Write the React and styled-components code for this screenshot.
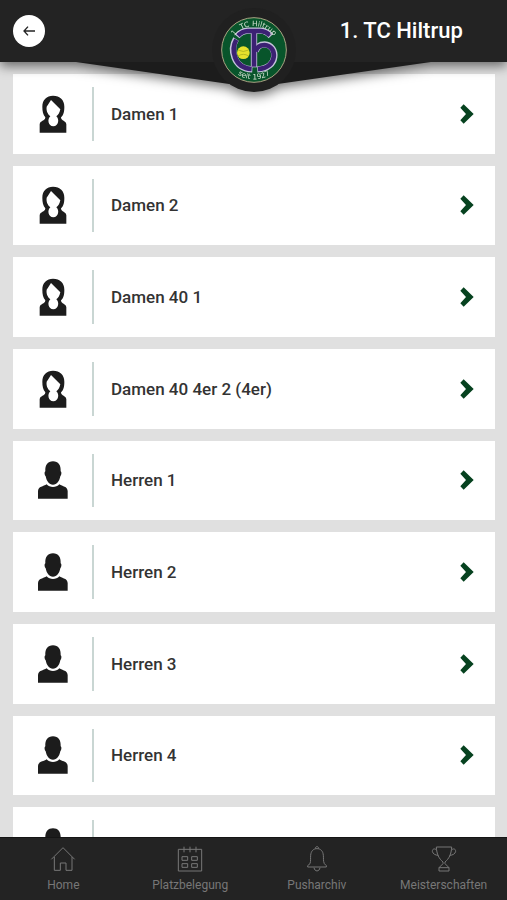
import React from 'react'
import styled, { createGlobalStyle } from 'styled-components'

const teams = [
  { id: 1, name: 'Damen 1', female: true },
  { id: 2, name: 'Damen 2', female: true },
  { id: 3, name: 'Damen 40 1', female: true },
  { id: 4, name: 'Damen 40 4er 2 (4er)', female: true },
  { id: 5, name: 'Herren 1' },
  { id: 6, name: 'Herren 2' },
  { id: 7, name: 'Herren 3' },
  { id: 8, name: 'Herren 4' },
  { id: 9, name: '' },
]

const tabs = [
  { label: 'Home', Icon: HomeIcon },
  { label: 'Platzbelegung', Icon: CalendarIcon },
  { label: 'Pusharchiv', Icon: BellIcon },
  { label: 'Meisterschaften', Icon: TrophyIcon },
]

export default function App() {
  return (
    <>
      <GlobalStyle />
      <Screen>
        <Header>
          <Notch viewBox="0 0 352 22" preserveAspectRatio="none" aria-hidden="true">
            <path d="M0 0H352L200 22H152Z" />
          </Notch>
          <BackButton type="button" aria-label="Zurück">
            <svg width="12" height="10" viewBox="0 0 36 30">
              <path d="M36 15H3M15 2L3 15L15 28" />
            </svg>
          </BackButton>
          <Badge>
            <ClubLogo />
          </Badge>
          <Title>1. TC Hiltrup</Title>
        </Header>
        <Main>
          <TeamList>
            {teams.map((team) => (
              <li key={team.id}>
                <TeamLink href="#">
                  <Avatar>{team.female ? <WomanIcon /> : <ManIcon />}</Avatar>
                  <TeamName>{team.name}</TeamName>
                  <Chevron viewBox="0 0 42 60" aria-hidden="true">
                    <path d="M11 1L41 30L11 59L1 49L18 30L1 11Z" />
                  </Chevron>
                </TeamLink>
              </li>
            ))}
          </TeamList>
        </Main>
        <TabBar>
          {tabs.map(({ label, Icon }) => (
            <Tab href="#" key={label}>
              <Icon />
              <span>{label}</span>
            </Tab>
          ))}
        </TabBar>
      </Screen>
    </>
  )
}

function ClubLogo() {
  return (
    <svg width="66" height="66" viewBox="154 50 198 198" role="img" aria-label="1. TC Hiltrup">
      <defs>
        <path id="logo-top" d="M181 149A72 72 0 0 1 325 149" />
        <path id="logo-bottom" d="M165 149A88 88 0 0 0 341 149" />
      </defs>
      <circle cx="253" cy="149" r="97" fill="#08552b" stroke="#a9a583" strokeWidth="3" />
      <g fill="none" stroke="#c5c3dc" strokeWidth="19">
        <path d="M199 116C181 146 189 204 248 207" />
        <path d="M263 207C328 206 326 134 285 132Q263 132 258 154" />
        <path d="M253 92V201" />
        <path d="M202 108Q215 92 235 91H273Q290 92 304 107" />
      </g>
      <g fill="none" stroke="#3b2173" strokeWidth="14">
        <path d="M200 118C184 146 191 202 246 206" />
        <path d="M265 206C325 204 324 136 285 134Q263 134 258 154" />
        <path d="M253 92V199" />
        <path d="M205 106Q217 93 235 92H273Q289 93 301 105" />
      </g>
      <circle cx="221" cy="157" r="19" fill="#e6e22c" />
      <path d="M205 149Q221 158 237 149M205 167Q221 157 237 167" fill="none" stroke="#9ea51b" strokeWidth="2" />
      <LogoText>
        <textPath href="#logo-top" startOffset="50%">
          1. TC Hiltrup
        </textPath>
      </LogoText>
      <LogoText>
        <textPath href="#logo-bottom" startOffset="50%">
          seit 1927
        </textPath>
      </LogoText>
    </svg>
  )
}

function WomanIcon() {
  return (
    <svg width="30" height="38" viewBox="112 283 90 114">
      <path
        fillRule="evenodd"
        d="M117 396V371C118 359 133 363 134 350C127 342 125 332 125 318C125 297 138 285 157 285C178 285 191 298 191 318C191 334 189 342 181 350C182 363 196 359 197 371V396ZM151 298L138 318C136 331 142 341 149 347C139 355 142 377 158 377C174 377 177 355 167 347C173 343 177 336 179 326Z"
      />
    </svg>
  )
}

function ManIcon() {
  return (
    <svg width="30" height="38" viewBox="53 61 90 114">
      <path d="M98 62C114 62 122 73 121 92C125 94 123 105 120 107C117 122 110 132 98 132C86 132 79 122 76 107C73 105 71 94 75 92C74 73 82 62 98 62Z" />
      <path d="M53 174V151C54 137 69 138 79 131C88 142 108 142 117 131C127 138 141 137 142 151V174Z" />
    </svg>
  )
}

function HomeIcon() {
  return (
    <svg width="26" height="26" viewBox="153 168 78 78">
      <path d="M157 208L192 173L227 208M166 201V241H184V219H201V241H219V201" />
    </svg>
  )
}

function CalendarIcon() {
  return (
    <svg width="26" height="26" viewBox="534 168 78 78">
      <path d="M538 178H608V243H538ZM555 170V187M573 170V187M591 170V187" />
      <path d="M549 200H566V211H549ZM578 200H595V211H578ZM549 221H566V232H549ZM578 221H595V232H578Z" />
    </svg>
  )
}

function BellIcon() {
  return (
    <svg width="26" height="26" viewBox="163 168 78 78">
      <path d="M197 176C196 168 208 168 207 176M181 221C184 212 182 204 183 196C184 183 191 176 202 176C213 176 220 183 221 196C222 204 220 212 224 221L230 227V231H174V227L181 221M193 233C195 246 209 246 211 233" />
    </svg>
  )
}

function TrophyIcon() {
  return (
    <svg width="26" height="26" viewBox="543 168 78 78">
      <path d="M559 171H605C604 193 597 206 585 216V221L597 233V243H567V233L579 221V216C567 206 560 193 559 171ZM567 233H597M560 180C553 174 547 177 547 184C548 191 556 196 565 196M604 180C611 174 617 177 617 184C616 191 608 196 599 196" />
    </svg>
  )
}

const GlobalStyle = createGlobalStyle`
  * {
    box-sizing: border-box;
  }
  body {
    margin: 0;
    background: #e0e0e0;
    font-family: Roboto, "Liberation Sans", sans-serif;
  }
`

const Screen = styled.div`
  height: 100vh;
  display: grid;
  grid-template-rows: auto minmax(0, 1fr) auto;
`

const Header = styled.header`
  position: relative;
  z-index: 1;
  height: 62px;
  display: grid;
  grid-template-columns: 1fr 84px 1fr;
  grid-template-rows: 62px;
  align-items: center;
  background: #232323;
  filter: drop-shadow(0 4px 6px rgba(0, 0, 0, 0.55));
`

/* wedge that hangs below the header and carries the club badge */
const Notch = styled.svg`
  position: absolute;
  top: 100%;
  left: 15%;
  width: 70%;
  height: 22px;
  fill: #1c1c1c;
`

const BackButton = styled.button`
  width: 32px;
  height: 32px;
  margin-left: 13px;
  padding: 0;
  display: flex;
  align-items: center;
  justify-content: center;
  border: none;
  border-radius: 50%;
  background: #fff;
  svg {
    fill: none;
    stroke: #232323;
    stroke-width: 4;
  }
`

const Badge = styled.div`
  position: relative;
  align-self: start;
  width: 84px;
  height: 84px;
  margin-top: 8px;
  display: flex;
  align-items: center;
  justify-content: center;
  border-radius: 50%;
  background: #202020;
`

const LogoText = styled.text`
  fill: #d5e3d4;
  font-family: "DejaVu Sans", sans-serif;
  font-size: 22px;
  text-anchor: middle;
`

const Title = styled.h1`
  margin: 0;
  color: #fff;
  font-size: 22px;
  font-weight: 500;
  line-height: 28px;
  text-align: center;
`

const Main = styled.main`
  overflow-y: auto;
  scrollbar-width: none;
`

const TeamList = styled.ul`
  margin: 0;
  padding: 12px 12px 12px 13px;
  display: grid;
  gap: 12px;
  list-style: none;
`

const TeamLink = styled.a`
  aspect-ratio: 121 / 20;
  width: 100%;
  padding: 13px 21px 13px 0;
  display: flex;
  align-items: center;
  background: #fff;
  color: #333;
  text-decoration: none;
`

const Avatar = styled.span`
  align-self: stretch;
  width: 81px;
  display: flex;
  align-items: center;
  justify-content: center;
  border-right: 2px solid #c9d6d3;
  fill: #1c1c1c;
`

const TeamName = styled.span`
  flex: 1;
  padding-left: 17px;
  font-size: 17px;
  font-weight: 500;
  line-height: 24px;
`

const Chevron = styled.svg`
  width: 14px;
  height: 20px;
  fill: #06421f;
`

const TabBar = styled.nav`
  height: 63px;
  padding-top: 8px;
  display: grid;
  grid-template-columns: repeat(4, 1fr);
  border-top: 1px solid #151515;
  background: #232323;
`

const Tab = styled.a`
  display: flex;
  flex-direction: column;
  align-items: center;
  gap: 4px;
  color: #777;
  font-size: 12px;
  line-height: 18px;
  text-decoration: none;
  svg {
    fill: none;
    stroke: #777;
    stroke-width: 3;
  }
`
